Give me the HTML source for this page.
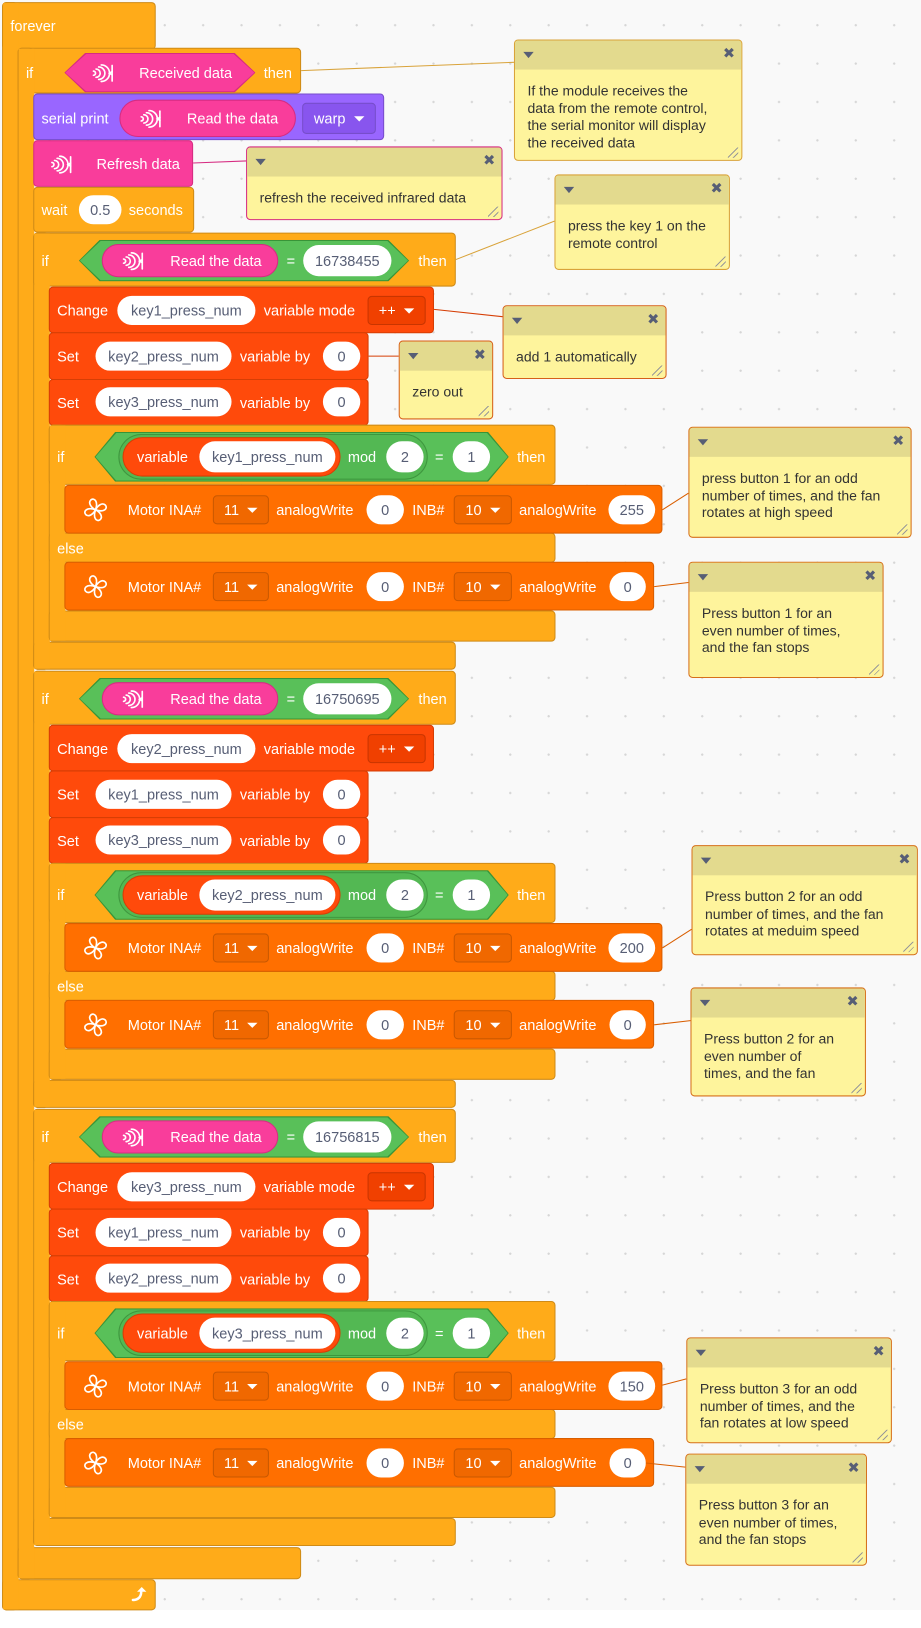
<!DOCTYPE html>
<html><head><meta charset="utf-8">
<style>
html,body{margin:0;padding:0;background:#fff;}
body{width:921px;height:1628px;overflow:hidden;position:relative;font-family:"Liberation Sans",Arial,sans-serif;}
#bg{position:absolute;left:0;top:0;width:921px;height:1610px;background-color:#F9F9F9;background-image:radial-gradient(circle,#d6d6d6 1px,transparent 1.3px);background-size:38.4px 38.4px;background-position:-8px 6px;}
#s{position:absolute;left:0;top:0;width:887px;height:1568px;transform:scale(1.0383);transform-origin:0 0;}
.a{position:absolute;box-sizing:border-box;}
.c{background:#FFAB19;border:1px solid #CF8B17;border-radius:4px;}
.f{position:absolute;background:#FFAB19;}
.v{background:#FF4A0B;border:1px solid #D63E05;border-radius:4px;}
.m{background:#FF6F00;border:1px solid #D95E00;border-radius:4px;}
.pu{background:#9966FF;border:1px solid #774DCB;border-radius:4px;}
.pk{background:#F93D9B;border:1px solid #D62C82;border-radius:4px;}
.t{position:absolute;color:#fff;font-size:14px;line-height:16px;white-space:nowrap;}
.i{position:absolute;box-sizing:border-box;background:#fff;border-radius:15px;color:#575E75;font-size:14px;display:flex;align-items:center;justify-content:center;white-space:nowrap;}
.dd{position:absolute;box-sizing:border-box;border-radius:4px;color:#fff;font-size:14px;display:flex;align-items:center;justify-content:center;white-space:nowrap;}
.dd b{display:inline-block;width:0;height:0;border-left:5px solid transparent;border-right:5px solid transparent;border-top:5px solid #fff;margin-left:8px;}
.md{background:#F06800;border:1px solid #C95800;}
.vd{background:#F04000;border:1px solid #C93500;}
.hex{position:absolute;clip-path:polygon(20px 0,calc(100% - 20px) 0,100% 50%,calc(100% - 20px) 100%,20px 100%,0 50%);}
.rp{position:absolute;box-sizing:border-box;background:#F93D9B;border:1px solid #D62C82;}
.cm{position:absolute;box-sizing:border-box;background:#FEF49C;border:1px solid #D9A33A;border-radius:4px;overflow:hidden;}
.cm .h{height:28px;background:#E3DA8E;position:relative;}
.cm .h:before{content:"";position:absolute;left:8px;top:11px;border-left:5px solid transparent;border-right:5px solid transparent;border-top:6px solid #575E75;}
.cm .h:after{content:"\2716";position:absolute;right:6px;top:5px;font-size:14px;color:#575E75;font-family:"DejaVu Sans",sans-serif;}
.cm .x{padding:13px 18px 0 12px;font-size:13.5px;line-height:16.6px;color:#333;}
.cm .r{position:absolute;right:3px;bottom:2px;width:10px;height:10px;background:linear-gradient(135deg,transparent 45%,#999 45%,#999 52%,transparent 52%,transparent 72%,#999 72%,#999 79%,transparent 79%);}
</style></head><body>
<div id="bg"></div>
<div id="s">
<svg width="0" height="0" style="position:absolute">
<defs>
<g id="ir" fill="none" stroke="#fff" stroke-width="1.6" stroke-linecap="round"><path d="M2 8.5a2 2 0 0 1 0 4"/><path d="M4.5 6.5a4 4 0 0 1 0 8"/><path d="M7 4.5a6 6 0 0 1 0 12"/><path d="M9.5 2.5a8 8 0 0 1 0 16"/><path d="M20 3v15"/><path d="M20 9l-2.5 1.5L20 12"/></g>
<g id="fan" fill="none" stroke="#fff" stroke-width="1.6" stroke-linejoin="round"><path id="pt" d="M12 12C8 10 4.5 5.5 7.5 2.5C10.5 0 15 3.5 12 12z"/><use href="#pt" transform="rotate(90 12 12)"/><use href="#pt" transform="rotate(180 12 12)"/><use href="#pt" transform="rotate(270 12 12)"/></g>
</defs></svg>

<!-- forever -->
<div class="a c" style="left:2px;top:2px;width:148px;height:46px"></div>
<div class="a c" style="left:2px;top:2px;width:15px;height:1549px"></div>
<div class="a c" style="left:2px;top:1521px;width:148px;height:30px"></div>
<div class="f" style="left:3px;top:3px;width:15px;height:1547px"></div>
<div class="t" style="left:10px;top:17px">forever</div>
<svg class="a" style="left:125px;top:1527px" width="18" height="18" viewBox="0 0 18 18"><path d="M3 14c5 0 8-3 8-8" fill="none" stroke="#fff" stroke-width="2.4" stroke-linecap="round"/><path d="M7 6l4.5-4.5L16 6z" fill="#fff"/></svg>

<!-- outer if -->
<div class="a c" style="left:17px;top:46px;width:273px;height:44px"></div>
<div class="a c" style="left:17px;top:46px;width:15px;height:1475px"></div>
<div class="a c" style="left:17px;top:1490px;width:273px;height:31px"></div>
<div class="f" style="left:18px;top:47px;width:15px;height:1473px"></div>
<div class="t" style="left:25px;top:62px">if</div>
<div class="hex" style="left:62px;top:51px;width:184px;height:38px;background:#D62C82"></div>
<div class="hex" style="left:63px;top:52px;width:182px;height:36px;background:#F93D9B"></div>
<svg class="a" style="left:88px;top:60px" width="24" height="21"><use href="#ir"/></svg>
<div class="t" style="left:134px;top:62px">Received data</div>
<div class="t" style="left:254px;top:62px">then</div>

<!-- serial print -->
<div class="a pu" style="left:32px;top:90px;width:338px;height:45px"></div>
<div class="t" style="left:40px;top:106px">serial print</div>
<div class="rp" style="left:115px;top:96px;width:170px;height:36px;border-radius:18px"></div>
<svg class="a" style="left:134px;top:104px" width="24" height="21"><use href="#ir"/></svg>
<div class="t" style="left:180px;top:106px">Read the data</div>
<div class="dd" style="left:291px;top:99px;width:71px;height:30px;background:#8855EE;border:1px solid #774DCB">warp<b></b></div>

<!-- refresh -->
<div class="a pk" style="left:32px;top:135px;width:154px;height:45px"></div>
<svg class="a" style="left:48px;top:148px" width="24" height="21"><use href="#ir"/></svg>
<div class="t" style="left:93px;top:150px">Refresh data</div>

<!-- wait -->
<div class="a c" style="left:32px;top:180px;width:155px;height:44px"></div>
<div class="t" style="left:40px;top:194px">wait</div>
<div class="i" style="left:76px;top:188px;width:41px;height:28px">0.5</div>
<div class="t" style="left:124px;top:194px">seconds</div>

<!-- GROUP A -->
<div class="a" style="left:0;top:0;width:887px;height:700px">
<div class="a c" style="left:32px;top:224px;width:15px;height:421px"></div>
<div class="a c" style="left:32px;top:224px;width:407px;height:52px"></div>
<div class="a c" style="left:32px;top:618px;width:407px;height:27px"></div>
<div class="f" style="left:33px;top:225px;width:15px;height:419px"></div>
<div class="t" style="left:40px;top:243px">if</div>
<div class="hex" style="left:76px;top:231px;width:318px;height:40px;background:#389438"></div>
<div class="hex" style="left:77px;top:232px;width:316px;height:38px;background:#59C059"></div>
<div class="rp" style="left:98px;top:235px;width:170px;height:32px;border-radius:16px"></div>
<svg class="a" style="left:117px;top:241px" width="24" height="21"><use href="#ir"/></svg>
<div class="t" style="left:164px;top:243px">Read the data</div>
<div class="t" style="left:276px;top:243px">=</div>
<div class="i" style="left:292px;top:236px;width:85px;height:30px">16738455</div>
<div class="t" style="left:403px;top:243px">then</div>

<div class="a v" style="left:47px;top:276px;width:371px;height:45px"></div>
<div class="t" style="left:55px;top:291px">Change</div>
<div class="i" style="left:113px;top:285px;width:133px;height:28px">key1_press_num</div>
<div class="t" style="left:254px;top:291px">variable mode</div>
<div class="dd vd" style="left:354px;top:285px;width:56px;height:28px">++<b></b></div>

<div class="a v" style="left:47px;top:320px;width:308px;height:46px"></div>
<div class="t" style="left:55px;top:335px">Set</div>
<div class="i" style="left:92px;top:329px;width:131px;height:28px">key2_press_num</div>
<div class="t" style="left:231px;top:335px">variable by</div>
<div class="i" style="left:311px;top:329px;width:36px;height:28px">0</div>

<div class="a v" style="left:47px;top:365px;width:308px;height:45px"></div>
<div class="t" style="left:55px;top:380px">Set</div>
<div class="i" style="left:92px;top:373px;width:131px;height:28px">key3_press_num</div>
<div class="t" style="left:231px;top:380px">variable by</div>
<div class="i" style="left:311px;top:373px;width:36px;height:28px">0</div>

<div class="a c" style="left:47px;top:409px;width:15px;height:209px"></div>
<div class="a c" style="left:47px;top:409px;width:488px;height:58px"></div>
<div class="a c" style="left:47px;top:513px;width:488px;height:29px"></div>
<div class="a c" style="left:47px;top:588px;width:488px;height:30px"></div>
<div class="f" style="left:48px;top:410px;width:15px;height:207px"></div>
<div class="t" style="left:55px;top:432px">if</div>
<div class="hex" style="left:91px;top:416px;width:399px;height:48px;background:#389438"></div>
<div class="hex" style="left:92px;top:417px;width:397px;height:46px;background:#59C059"></div>
<div class="a" style="left:114px;top:418px;width:298px;height:44px;border-radius:22px;border:1px solid #3E963E;background:#53B853"></div>
<div class="a" style="left:118px;top:421px;width:210px;height:38px;border-radius:19px;background:#FF4A0B;border:1px solid #D63E05"></div>
<div class="t" style="left:132px;top:432px">variable</div>
<div class="i" style="left:192px;top:425px;width:131px;height:30px">key1_press_num</div>
<div class="t" style="left:335px;top:432px">mod</div>
<div class="i" style="left:372px;top:425px;width:36px;height:30px">2</div>
<div class="t" style="left:419px;top:432px">=</div>
<div class="i" style="left:436px;top:425px;width:36px;height:30px">1</div>
<div class="t" style="left:498px;top:432px">then</div>

<div class="a m" style="left:62px;top:467px;width:576px;height:47px"></div>
<svg class="a" style="left:80px;top:479px" width="24" height="24"><use href="#fan"/></svg>
<div class="t" style="left:123px;top:483px">Motor INA#</div>
<div class="dd md" style="left:205px;top:477px;width:54px;height:28px">11<b></b></div>
<div class="t" style="left:266px;top:483px">analogWrite</div>
<div class="i" style="left:353px;top:477px;width:36px;height:28px">0</div>
<div class="t" style="left:397px;top:483px">INB#</div>
<div class="dd md" style="left:437px;top:477px;width:56px;height:28px">10<b></b></div>
<div class="t" style="left:500px;top:483px">analogWrite</div>
<div class="i" style="left:586px;top:477px;width:45px;height:28px">255</div>

<div class="t" style="left:55px;top:520px">else</div>

<div class="a m" style="left:62px;top:541px;width:568px;height:47px"></div>
<svg class="a" style="left:80px;top:553px" width="24" height="24"><use href="#fan"/></svg>
<div class="t" style="left:123px;top:557px">Motor INA#</div>
<div class="dd md" style="left:205px;top:551px;width:54px;height:28px">11<b></b></div>
<div class="t" style="left:266px;top:557px">analogWrite</div>
<div class="i" style="left:353px;top:551px;width:36px;height:28px">0</div>
<div class="t" style="left:397px;top:557px">INB#</div>
<div class="dd md" style="left:437px;top:551px;width:56px;height:28px">10<b></b></div>
<div class="t" style="left:500px;top:557px">analogWrite</div>
<div class="i" style="left:587px;top:551px;width:35px;height:28px">0</div>
</div>

<!-- GROUP B -->
<div class="a" style="left:0;top:422px;width:887px;height:700px">
<div class="a c" style="left:32px;top:224px;width:15px;height:421px"></div>
<div class="a c" style="left:32px;top:224px;width:407px;height:52px"></div>
<div class="a c" style="left:32px;top:618px;width:407px;height:27px"></div>
<div class="f" style="left:33px;top:225px;width:15px;height:419px"></div>
<div class="t" style="left:40px;top:243px">if</div>
<div class="hex" style="left:76px;top:231px;width:318px;height:40px;background:#389438"></div>
<div class="hex" style="left:77px;top:232px;width:316px;height:38px;background:#59C059"></div>
<div class="rp" style="left:98px;top:235px;width:170px;height:32px;border-radius:16px"></div>
<svg class="a" style="left:117px;top:241px" width="24" height="21"><use href="#ir"/></svg>
<div class="t" style="left:164px;top:243px">Read the data</div>
<div class="t" style="left:276px;top:243px">=</div>
<div class="i" style="left:292px;top:236px;width:85px;height:30px">16750695</div>
<div class="t" style="left:403px;top:243px">then</div>

<div class="a v" style="left:47px;top:276px;width:371px;height:45px"></div>
<div class="t" style="left:55px;top:291px">Change</div>
<div class="i" style="left:113px;top:285px;width:133px;height:28px">key2_press_num</div>
<div class="t" style="left:254px;top:291px">variable mode</div>
<div class="dd vd" style="left:354px;top:285px;width:56px;height:28px">++<b></b></div>

<div class="a v" style="left:47px;top:320px;width:308px;height:46px"></div>
<div class="t" style="left:55px;top:335px">Set</div>
<div class="i" style="left:92px;top:329px;width:131px;height:28px">key1_press_num</div>
<div class="t" style="left:231px;top:335px">variable by</div>
<div class="i" style="left:311px;top:329px;width:36px;height:28px">0</div>

<div class="a v" style="left:47px;top:365px;width:308px;height:45px"></div>
<div class="t" style="left:55px;top:380px">Set</div>
<div class="i" style="left:92px;top:373px;width:131px;height:28px">key3_press_num</div>
<div class="t" style="left:231px;top:380px">variable by</div>
<div class="i" style="left:311px;top:373px;width:36px;height:28px">0</div>

<div class="a c" style="left:47px;top:409px;width:15px;height:209px"></div>
<div class="a c" style="left:47px;top:409px;width:488px;height:58px"></div>
<div class="a c" style="left:47px;top:513px;width:488px;height:29px"></div>
<div class="a c" style="left:47px;top:588px;width:488px;height:30px"></div>
<div class="f" style="left:48px;top:410px;width:15px;height:207px"></div>
<div class="t" style="left:55px;top:432px">if</div>
<div class="hex" style="left:91px;top:416px;width:399px;height:48px;background:#389438"></div>
<div class="hex" style="left:92px;top:417px;width:397px;height:46px;background:#59C059"></div>
<div class="a" style="left:114px;top:418px;width:298px;height:44px;border-radius:22px;border:1px solid #3E963E;background:#53B853"></div>
<div class="a" style="left:118px;top:421px;width:210px;height:38px;border-radius:19px;background:#FF4A0B;border:1px solid #D63E05"></div>
<div class="t" style="left:132px;top:432px">variable</div>
<div class="i" style="left:192px;top:425px;width:131px;height:30px">key2_press_num</div>
<div class="t" style="left:335px;top:432px">mod</div>
<div class="i" style="left:372px;top:425px;width:36px;height:30px">2</div>
<div class="t" style="left:419px;top:432px">=</div>
<div class="i" style="left:436px;top:425px;width:36px;height:30px">1</div>
<div class="t" style="left:498px;top:432px">then</div>

<div class="a m" style="left:62px;top:467px;width:576px;height:47px"></div>
<svg class="a" style="left:80px;top:479px" width="24" height="24"><use href="#fan"/></svg>
<div class="t" style="left:123px;top:483px">Motor INA#</div>
<div class="dd md" style="left:205px;top:477px;width:54px;height:28px">11<b></b></div>
<div class="t" style="left:266px;top:483px">analogWrite</div>
<div class="i" style="left:353px;top:477px;width:36px;height:28px">0</div>
<div class="t" style="left:397px;top:483px">INB#</div>
<div class="dd md" style="left:437px;top:477px;width:56px;height:28px">10<b></b></div>
<div class="t" style="left:500px;top:483px">analogWrite</div>
<div class="i" style="left:586px;top:477px;width:45px;height:28px">200</div>

<div class="t" style="left:55px;top:520px">else</div>

<div class="a m" style="left:62px;top:541px;width:568px;height:47px"></div>
<svg class="a" style="left:80px;top:553px" width="24" height="24"><use href="#fan"/></svg>
<div class="t" style="left:123px;top:557px">Motor INA#</div>
<div class="dd md" style="left:205px;top:551px;width:54px;height:28px">11<b></b></div>
<div class="t" style="left:266px;top:557px">analogWrite</div>
<div class="i" style="left:353px;top:551px;width:36px;height:28px">0</div>
<div class="t" style="left:397px;top:557px">INB#</div>
<div class="dd md" style="left:437px;top:551px;width:56px;height:28px">10<b></b></div>
<div class="t" style="left:500px;top:557px">analogWrite</div>
<div class="i" style="left:587px;top:551px;width:35px;height:28px">0</div>
</div>

<!-- GROUP C -->
<div class="a" style="left:0;top:844px;width:887px;height:700px">
<div class="a c" style="left:32px;top:224px;width:15px;height:421px"></div>
<div class="a c" style="left:32px;top:224px;width:407px;height:52px"></div>
<div class="a c" style="left:32px;top:618px;width:407px;height:27px"></div>
<div class="f" style="left:33px;top:225px;width:15px;height:419px"></div>
<div class="t" style="left:40px;top:243px">if</div>
<div class="hex" style="left:76px;top:231px;width:318px;height:40px;background:#389438"></div>
<div class="hex" style="left:77px;top:232px;width:316px;height:38px;background:#59C059"></div>
<div class="rp" style="left:98px;top:235px;width:170px;height:32px;border-radius:16px"></div>
<svg class="a" style="left:117px;top:241px" width="24" height="21"><use href="#ir"/></svg>
<div class="t" style="left:164px;top:243px">Read the data</div>
<div class="t" style="left:276px;top:243px">=</div>
<div class="i" style="left:292px;top:236px;width:85px;height:30px">16756815</div>
<div class="t" style="left:403px;top:243px">then</div>

<div class="a v" style="left:47px;top:276px;width:371px;height:45px"></div>
<div class="t" style="left:55px;top:291px">Change</div>
<div class="i" style="left:113px;top:285px;width:133px;height:28px">key3_press_num</div>
<div class="t" style="left:254px;top:291px">variable mode</div>
<div class="dd vd" style="left:354px;top:285px;width:56px;height:28px">++<b></b></div>

<div class="a v" style="left:47px;top:320px;width:308px;height:46px"></div>
<div class="t" style="left:55px;top:335px">Set</div>
<div class="i" style="left:92px;top:329px;width:131px;height:28px">key1_press_num</div>
<div class="t" style="left:231px;top:335px">variable by</div>
<div class="i" style="left:311px;top:329px;width:36px;height:28px">0</div>

<div class="a v" style="left:47px;top:365px;width:308px;height:45px"></div>
<div class="t" style="left:55px;top:380px">Set</div>
<div class="i" style="left:92px;top:373px;width:131px;height:28px">key2_press_num</div>
<div class="t" style="left:231px;top:380px">variable by</div>
<div class="i" style="left:311px;top:373px;width:36px;height:28px">0</div>

<div class="a c" style="left:47px;top:409px;width:15px;height:209px"></div>
<div class="a c" style="left:47px;top:409px;width:488px;height:58px"></div>
<div class="a c" style="left:47px;top:513px;width:488px;height:29px"></div>
<div class="a c" style="left:47px;top:588px;width:488px;height:30px"></div>
<div class="f" style="left:48px;top:410px;width:15px;height:207px"></div>
<div class="t" style="left:55px;top:432px">if</div>
<div class="hex" style="left:91px;top:416px;width:399px;height:48px;background:#389438"></div>
<div class="hex" style="left:92px;top:417px;width:397px;height:46px;background:#59C059"></div>
<div class="a" style="left:114px;top:418px;width:298px;height:44px;border-radius:22px;border:1px solid #3E963E;background:#53B853"></div>
<div class="a" style="left:118px;top:421px;width:210px;height:38px;border-radius:19px;background:#FF4A0B;border:1px solid #D63E05"></div>
<div class="t" style="left:132px;top:432px">variable</div>
<div class="i" style="left:192px;top:425px;width:131px;height:30px">key3_press_num</div>
<div class="t" style="left:335px;top:432px">mod</div>
<div class="i" style="left:372px;top:425px;width:36px;height:30px">2</div>
<div class="t" style="left:419px;top:432px">=</div>
<div class="i" style="left:436px;top:425px;width:36px;height:30px">1</div>
<div class="t" style="left:498px;top:432px">then</div>

<div class="a m" style="left:62px;top:467px;width:576px;height:47px"></div>
<svg class="a" style="left:80px;top:479px" width="24" height="24"><use href="#fan"/></svg>
<div class="t" style="left:123px;top:483px">Motor INA#</div>
<div class="dd md" style="left:205px;top:477px;width:54px;height:28px">11<b></b></div>
<div class="t" style="left:266px;top:483px">analogWrite</div>
<div class="i" style="left:353px;top:477px;width:36px;height:28px">0</div>
<div class="t" style="left:397px;top:483px">INB#</div>
<div class="dd md" style="left:437px;top:477px;width:56px;height:28px">10<b></b></div>
<div class="t" style="left:500px;top:483px">analogWrite</div>
<div class="i" style="left:586px;top:477px;width:45px;height:28px">150</div>

<div class="t" style="left:55px;top:520px">else</div>

<div class="a m" style="left:62px;top:541px;width:568px;height:47px"></div>
<svg class="a" style="left:80px;top:553px" width="24" height="24"><use href="#fan"/></svg>
<div class="t" style="left:123px;top:557px">Motor INA#</div>
<div class="dd md" style="left:205px;top:551px;width:54px;height:28px">11<b></b></div>
<div class="t" style="left:266px;top:557px">analogWrite</div>
<div class="i" style="left:353px;top:551px;width:36px;height:28px">0</div>
<div class="t" style="left:397px;top:557px">INB#</div>
<div class="dd md" style="left:437px;top:551px;width:56px;height:28px">10<b></b></div>
<div class="t" style="left:500px;top:557px">analogWrite</div>
<div class="i" style="left:587px;top:551px;width:35px;height:28px">0</div>
</div>

<!-- connector lines -->
<svg class="a" style="left:0;top:0" width="887" height="1568">
<g stroke-width="1" fill="none">
<line x1="290" y1="68" x2="495" y2="60" stroke="#D9A33A"/>
<line x1="186" y1="157" x2="237" y2="155" stroke="#D62C82"/>
<line x1="439" y1="250" x2="534" y2="213" stroke="#D9A33A"/>
<line x1="418" y1="298" x2="484" y2="305" stroke="#D63E05"/>
<line x1="355" y1="343" x2="384" y2="343" stroke="#D63E05"/>
<line x1="638" y1="491" x2="663" y2="475" stroke="#D95E00"/>
<line x1="630" y1="565" x2="663" y2="561" stroke="#D95E00"/>
<line x1="638" y1="913" x2="666" y2="895" stroke="#D95E00"/>
<line x1="630" y1="987" x2="665" y2="983" stroke="#D95E00"/>
<line x1="638" y1="1334" x2="661" y2="1328" stroke="#D95E00"/>
<line x1="622" y1="1409" x2="660" y2="1413" stroke="#D95E00"/>
</g></svg>

<!-- comments -->
<div class="cm" style="left:495px;top:38px;width:220px;height:117px"><div class="h"></div><div class="x">If the module receives the<br>data from the remote control,<br>the serial monitor will display<br>the received data</div><div class="r"></div></div>
<div class="cm" style="left:237px;top:141px;width:247px;height:71px;border-color:#D62C82"><div class="h"></div><div class="x">refresh the received infrared data</div><div class="r"></div></div>
<div class="cm" style="left:534px;top:168px;width:169px;height:92px"><div class="h"></div><div class="x">press the key 1 on the<br>remote control</div><div class="r"></div></div>
<div class="cm" style="left:484px;top:294px;width:158px;height:71px;border-color:#D6601A"><div class="h"></div><div class="x">add 1 automatically</div><div class="r"></div></div>
<div class="cm" style="left:384px;top:328px;width:91px;height:76px;border-color:#D6601A"><div class="h"></div><div class="x">zero out</div><div class="r"></div></div>
<div class="cm" style="left:663px;top:411px;width:215px;height:107px;border-color:#D6701A"><div class="h"></div><div class="x">press button 1 for an odd<br>number of times, and the fan<br>rotates at high speed</div><div class="r"></div></div>
<div class="cm" style="left:663px;top:541px;width:188px;height:112px;border-color:#D6701A"><div class="h"></div><div class="x">Press button 1 for an<br>even number of times,<br>and the fan stops</div><div class="r"></div></div>
<div class="cm" style="left:666px;top:814px;width:218px;height:106px;border-color:#D6701A"><div class="h"></div><div class="x">Press button 2 for an odd<br>number of times, and the fan<br>rotates at meduim speed</div><div class="r"></div></div>
<div class="cm" style="left:665px;top:951px;width:169px;height:105px;border-color:#D6701A"><div class="h"></div><div class="x">Press button 2 for an<br>even number of<br>times, and the fan</div><div class="r"></div></div>
<div class="cm" style="left:661px;top:1288px;width:198px;height:102px;border-color:#D6701A"><div class="h"></div><div class="x">Press button 3 for an odd<br>number of times, and the<br>fan rotates at low speed</div><div class="r"></div></div>
<div class="cm" style="left:660px;top:1400px;width:175px;height:108px;border-color:#D6701A"><div class="h"></div><div class="x">Press button 3 for an<br>even number of times,<br>and the fan stops</div><div class="r"></div></div>
</div>
</body></html>
